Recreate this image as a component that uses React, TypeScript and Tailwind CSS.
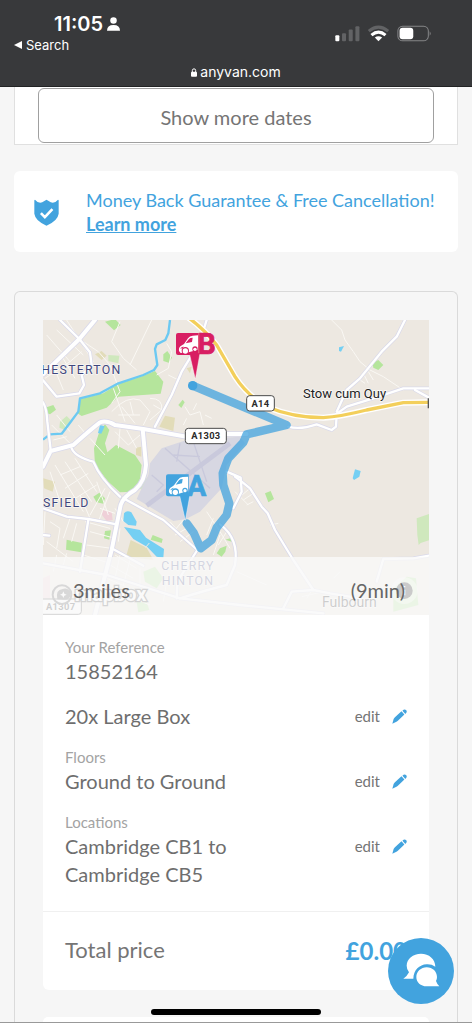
import type { ReactNode } from "react";

interface SummaryItem {
  label?: string;
  value: string;
  editable: boolean;
}

const SUMMARY: SummaryItem[] = [
  { label: "Your Reference", value: "15852164", editable: false },
  { value: "20x Large Box", editable: true },
  { label: "Floors", value: "Ground to Ground", editable: true },
  { label: "Locations", value: "Cambridge CB1 to Cambridge CB5", editable: true },
];

const PARKS = [
  "M345 168 L370 200 L362 236 L235 245 L200 278 L125 303 L112 295 L122 252 L190 235 L235 207 L310 182 Z",
  "M195 328 L208 345 L195 385 L202 412 L228 390 L285 420 L305 450 L300 495 L280 530 L240 532 L205 500 L165 450 L162 400 L178 350 Z",
  "M195 20 L225 12 L242 30 L222 46 Z",
  "M370 118 L382 108 L396 128 L386 143 L370 138 Z",
  "M415 270 L428 254 L434 262 L424 279 Z",
  "M15 278 L40 270 L48 284 L30 298 L18 294 Z",
  "M160 545 L178 533 L195 550 L190 566 L170 562 Z",
  "M80 674 L126 684 L124 712 L78 704 Z",
  "M195 648 L213 646 L208 674 L192 670 Z",
  "M338 660 L368 672 L365 684 L332 674 Z",
  "M675 535 L692 528 L702 552 L685 562 Z",
  "M998 145 L1015 135 L1030 150 L1015 165 L1000 158 Z",
  "M540 700 L560 692 L556 710 L545 725 L530 715 Z",
  "M556 674 L575 668 L575 680 Z",
  "M310 770 L345 755 L370 790 L350 820 L315 800 Z",
  "M290 862 L320 860 L328 885 L295 892 Z",
  "M1060 820 L1100 785 L1128 790 L1135 870 L1060 890 Z",
];

const PALE_PARKS = [
  "M1130 610 L1167 597 L1167 676 L1142 684 L1136 690 L1132 660 Z",
  "M60 320 L80 303 L92 315 L75 345 L58 338 Z",
  "M205 120 L238 122 L235 145 L205 138 Z",
  "M300 495 L325 490 L318 520 L298 522 Z",
];

const SANDY = [
  "M358 335 L375 302 L405 308 L400 348 Z",
  "M165 118 L185 108 L200 122 L185 135 Z",
  "M440 160 L455 155 L450 175 Z",
  "M288 398 L304 395 L304 425 L288 420 Z",
  "M10 490 L45 500 L38 530 L12 520 Z",
  "M272 675 L320 698 L340 735 L258 725 Z",
];

const LANES = [
  "M80 15 L160 140 M20 60 L90 140 M50 45 L130 120 M35 140 L70 225 M60 115 L105 190 M15 190 L60 160 L90 140 L125 110",
  "M130 80 L175 110 L210 150 L240 230 L215 265 M240 20 L215 80 L250 130 L290 165 M335 15 L270 150",
  "M380 85 L395 110 L385 160 L350 180 M385 180 L415 195 M220 220 L255 320",
  "M215 290 Q260 240 300 255 L330 290 L310 330 M235 300 L300 300 M245 275 L285 325 M270 260 L280 300",
  "M330 250 Q370 250 365 285 L330 315 M340 270 L375 290 M435 275 L450 300 L480 290 L490 330 M460 285 L470 265 M495 300 L515 310 M440 310 L430 330",
  "M50 300 L90 350 M35 330 L95 390 M40 375 L80 365 M115 330 L140 360 M150 370 L195 420 M225 350 L265 390 L300 360 M240 340 L235 400 M260 345 L290 400",
  "M45 450 L130 590 M75 440 L155 560 M105 430 L170 530 M60 480 L120 455 M75 520 L145 475 M90 560 L170 510 M30 470 L60 560 M120 540 L150 610",
  "M170 500 L205 600 M195 520 L150 600 M180 580 L225 595 M210 530 L175 620 M135 620 L210 640 M150 650 L225 670 M140 690 L215 700",
  "M15 590 L10 690 M30 620 L60 640 L50 700 M90 610 L70 670 M110 625 L95 680 M20 680 L100 740 M50 720 L40 770 M80 715 L65 765 M130 720 L210 745",
  "M225 580 L250 620 M240 640 L235 680 M225 720 L290 760 M210 750 L280 790 M200 790 L270 820 M240 720 L225 790 M270 735 L250 810",
  "M390 620 L450 690 M405 660 L440 640 M420 680 L460 650 M430 615 L405 645 M500 590 L540 650 L570 700 M520 610 L500 660 M540 660 L520 720 M560 650 L535 690",
  "M585 530 L625 570 M600 545 L630 520 M610 555 L640 535 M620 570 L640 560 M690 630 L715 625",
  "M875 15 L905 45 L915 75 L940 110 L960 140 L990 165 L1030 185 L1090 225 M970 175 L985 205 M985 170 L1000 195 M960 195 L975 205",
  "M785 845 L850 830 M880 790 L900 770 M820 820 L800 850 M590 770 L680 810 M300 760 L300 860 M380 800 L370 860 M230 830 L330 870",
];

const ROADS = [
  "M60 15 L118 72 L150 112 L155 150 L125 180 L132 210 L118 235 L50 245 L9 196",
  "M500 15 L480 80 L425 170 L395 240 L345 335",
  "M9 262 Q20 280 22 320 L32 405",
  "M95 400 Q105 425 160 440 Q180 490 240 545",
  "M250 550 L370 615 L472 705 L412 800 L410 850",
  "M9 580 L80 605 L145 612 L230 628",
  "M145 615 L120 770",
  "M215 700 L310 752",
  "M9 660 L28 662",
  "M9 745 L200 780 L420 850 L600 870 L850 895",
  "M560 470 L602 488 L605 530 L580 580",
  "M585 485 L605 500 L630 520 L665 575 L683 595 L705 645 L760 735 L820 825",
  "M540 628 Q598 670 585 750 L560 810 Q500 825 420 850",
  "M1095 15 L1070 65 L1025 110 L960 190 L920 225 L890 290",
  "M1167 220 L1090 220 L1000 250 L920 275 L885 300",
  "M1125 225 L1167 248",
  "M745 335 Q780 345 830 328 L875 345 L888 335 L890 300",
  "M1167 722 L1120 730 L1030 732 L1010 800",
  "M730 880 L755 830 L820 825 L870 835 L960 850",
];

const MAIN_ROADS = [
  "M165 15 L118 72 L9 178",
  "M9 455 L32 408 L100 390 Q150 345 180 322 Q200 315 225 330 L310 342 L440 365 L560 357 L620 357",
  "M308 342 L318 450 Q315 500 285 525 Q250 545 242 570 L215 705 L185 820 L165 900",
];

const ROUTE =
  "M458 212 L740 330 L620 358 L610 382 L565 430 L548 475 L550 510 L568 565 L560 600 L530 638 L515 675 L482 700 L462 655 L440 625";

const A14 =
  "M445 8 Q490 40 530 90 L585 185 Q620 240 680 275 Q760 308 850 308 Q900 305 980 285 L1090 263 L1167 262";

function Shield({ x, y, width, label }: { x: number; y: number; width: number; label: string }) {
  return (
    <g>
      <rect x={x} y={y} width={width} height="46" rx="9" fill="#fff" stroke="#4a4a4a" strokeWidth="3" />
      <text x={x + width / 2} y={y + 33} textAnchor="middle" fontSize="28" fontWeight="700" fill="#2b2b2b" letterSpacing="1">
        {label}
      </text>
    </g>
  );
}

// van badge, letter and needle; (x, y) is the badge's top left
function Pin({ x, y, color, letter }: { x: number; y: number; color: string; letter: string }) {
  return (
    <g transform={`translate(${x} ${y})`}>
      <path d="M40 60 H72 L58 138 Z" fill={color} stroke="#fff" strokeOpacity="0.6" strokeWidth="2" />
      <text
        x="92"
        y="64"
        textAnchor="middle"
        fontSize="86"
        fontWeight="700"
        fill={color}
        stroke={color}
        strokeWidth="2"
      >
        {letter}
      </text>
      <path d="M6 0 H68 V66 H6 Q0 66 0 60 V6 Q0 0 6 0 Z" fill={color} />
      <path
        d="M9 54 Q7 42 18 37 L24 33 L36 16 Q41 8 50 8 L66 7 V50 L38 58 L14 60 Z"
        fill="#fff"
      />
      <path d="M29 31 L39 18 Q42 14 50 14 L48 27 Z" fill={color} />
      <path d="M14 46 L22 42" stroke={color} strokeWidth="3" />
      <circle cx="28" cy="53" r="11" fill={color} />
      <circle cx="28" cy="54" r="8" fill="#fff" />
      <circle cx="57" cy="48" r="8" fill={color} />
      <circle cx="57" cy="49" r="5" fill="#fff" />
    </g>
  );
}

function RouteMap() {
  return (
    <svg viewBox="9 15 1158 885" className="block h-auto w-full font-['Roboto',sans-serif]" role="img" aria-label="Route map">
      <rect x="9" y="15" width="1158" height="885" fill="#ede8e1" />
      {SANDY.map((d) => (
        <path key={d} d={d} fill="#e2dcb9" />
      ))}
      {PALE_PARKS.map((d) => (
        <path key={d} d={d} fill="#cfe8bd" />
      ))}
      {PARKS.map((d) => (
        <path key={d} d={d} fill="#b5e59c" />
      ))}
      <path d="M188 585 L215 590 L218 615 L200 618 L186 600 Z M9 790 L30 780 V850 H9 Z" fill="#efd0d8" />

      {/* Airfield */}
      <path
        d="M365 400 L440 375 L600 365 L615 385 L560 450 L545 520 L480 590 L438 612 L400 618 L290 552 L305 520 L325 480 L330 445 Z"
        fill="#d7d7e2"
      />
      <g stroke="#c9c9dc" fill="none">
        <path d="M320 572 L570 385" strokeWidth="14" />
        <path d="M375 400 L510 520 M460 380 L500 500 M335 480 L370 510 L350 530 M400 420 L480 425 M420 385 L410 440" strokeWidth="4" />
      </g>

      <g fill="none" stroke="#faf8f4" strokeWidth="3" strokeLinejoin="round">
        {LANES.map((d) => (
          <path key={d} d={d} />
        ))}
      </g>

      {/* River and ponds */}
      <path
        d="M390 15 L385 55 L376 75 L350 88 L345 102 L352 150 L342 165 L310 180 L235 205 L180 235 L120 250 L115 290 L85 330 L65 356 L30 358 L9 374"
        fill="none"
        stroke="#6cc9f2"
        strokeWidth="7"
        strokeLinejoin="round"
      />
      <g fill="#74cff3">
        <path d="M180 330 L194 334 L184 356 L174 354 Z" />
        <path d="M252 595 Q260 585 274 592 L290 620 L288 632 L265 630 L250 618 Z" />
        <path d="M252 636 L300 645 L318 668 L372 702 L370 728 L350 725 L322 696 L280 672 Z" />
        <path d="M897 97 L912 93 L903 110 L897 108 Z" />
        <path d="M945 463 L962 468 L958 485 L942 495 L938 490 Z" />
      </g>
      <path d="M316 698 L328 684" stroke="#ede8e1" strokeWidth="3" />

      <g fill="none" strokeLinejoin="round" strokeLinecap="round">
        {ROADS.map((d) => (
          <path key={d} d={d} stroke="#d9d9ea" strokeWidth="11" />
        ))}
        {MAIN_ROADS.map((d) => (
          <path key={d} d={d} stroke="#d9d9ea" strokeWidth="17" />
        ))}
        {ROADS.map((d) => (
          <path key={d} d={d} stroke="#fff" strokeWidth="7" />
        ))}
        {MAIN_ROADS.map((d) => (
          <path key={d} d={d} stroke="#fff" strokeWidth="12" />
        ))}
        <path d={A14} stroke="#fff" strokeWidth="18" />
        <path d={A14} stroke="#f3cf5b" strokeWidth="10" />
        <path d={ROUTE} stroke="#42a3de" strokeOpacity="0.75" strokeWidth="25" />
      </g>
      <circle cx="458" cy="212" r="14" fill="#42a3de" />
      <path d="M1165 250 V280" stroke="#555" strokeWidth="4" />

      <Shield x={436} y={340} width={123} label="A1303" />
      <Shield x={620} y={242} width={83} label="A14" />
      <Shield x={0} y={852} width={124} label="A1307" />

      <g fill="#3f477d" stroke="#fff" strokeWidth="4" strokeOpacity="0.7" paintOrder="stroke" fontSize="37" className="tracking-widest">
        <text x="4" y="177">HESTERTON</text>
        <text x="9" y="575">SFIELD</text>
        <text x="444" y="766" textAnchor="middle">CHERRY</text>
        <text x="444" y="810" textAnchor="middle">HINTON</text>
      </g>
      <g fill="#222" stroke="#fff" strokeWidth="4" strokeOpacity="0.8" paintOrder="stroke" fontSize="39">
        <text x="789" y="250">Stow cum Quy</text>
        <text x="846" y="877" fontSize="42">Fulbourn</text>
      </g>

      <Pin x={408} y={54} color="#d81e62" letter="B" />
      <Pin x={378} y={478} color="#42a3de" letter="A" />

      {/* Attribution */}
      <circle cx="66" cy="839" r="28" fill="none" stroke="#555" strokeWidth="6" />
      <path d="M52 853 Q46 824 68 822 A17 17 0 1 1 72 854 Z" fill="#555" />
      <path d="M70 829 L73 836 L80 839 L73 842 L70 849 L67 842 L60 839 L67 836 Z" fill="#fff" />
      <text x="104" y="857" fontSize="60" fontWeight="700" fill="#fff" stroke="#444" strokeWidth="8" paintOrder="stroke">
        mapbox
      </text>
      <circle cx="1093" cy="827" r="40" fill="#fff" fillOpacity="0.5" />
      <circle cx="1093" cy="827" r="25" fill="#111" />
      <path d="M1093 813 V817 M1093 824 V841" stroke="#fff" strokeWidth="6" />
    </svg>
  );
}

function PencilIcon() {
  return (
    <svg viewBox="0 0 46 46" className="size-[15px] fill-[#42a3de]" aria-hidden="true">
      <path d="M1 45 L5 31 Q6 28 9 25 L29 7 L38 17 L18 36 Q15 39 12 40 Z" />
      <path d="M32 5 Q38 -1 43 3 Q48 8 42 14 L41 15 Z" />
    </svg>
  );
}

function StatusBar() {
  return (
    <header className="border-b border-[#222324] bg-[#38393b] pt-3 pb-[5px] font-['Inter',sans-serif] text-white">
      <div className="flex items-center justify-between pr-10 pl-3.5">
        <div>
          <div className="flex items-center gap-1 pl-10 text-xl leading-6 font-semibold">
            <span>11:05</span>
            <svg viewBox="0 0 40 42" className="h-3.5 w-[13px] fill-white" aria-hidden="true">
              <circle cx="20" cy="10" r="10" />
              <path d="M0 42 Q0 24 20 24 Q40 24 40 42 Z" />
            </svg>
          </div>
          <a href="#search" className="flex items-center gap-1 text-[13px] leading-[18px]">
            <svg viewBox="0 0 8 8" className="size-2 fill-white" aria-hidden="true">
              <path d="M0 4 L8 0 V8 Z" />
            </svg>
            Search
          </a>
        </div>
        <svg viewBox="0 0 290 50" className="h-[17px] w-[97px]" aria-hidden="true">
          <rect x="1" y="30" width="12" height="18" rx="3" fill="#fff" />
          <g fill="#626365">
            <rect x="21" y="24" width="12" height="24" rx="3" />
            <rect x="41" y="13" width="12" height="35" rx="3" />
            <rect x="61" y="3" width="12" height="45" rx="3" />
          </g>
          <g fill="none" strokeWidth="9">
            <path d="M101 18 Q130 -6 159 18" stroke="#626365" />
            <path d="M109 30 Q130 12 151 30" stroke="#fff" />
          </g>
          <path d="M119 37 Q130 29 141 37 L130 48 Z" fill="#fff" />
          <rect x="188" y="3" width="91" height="44" rx="14" fill="none" stroke="#858688" strokeWidth="3" />
          <rect x="193" y="8" width="41" height="34" rx="9" fill="#fff" />
          <path d="M283 18 Q289 25 283 32 Z" fill="#858688" />
        </svg>
      </div>
      <a href="#page" className="mt-[9px] flex items-center justify-center gap-[3px] text-sm leading-[18px]">
        <svg viewBox="0 0 18 26" className="h-[9px] w-1.5" aria-hidden="true">
          <rect y="11" width="18" height="15" rx="3" fill="#fff" />
          <path d="M4 12 V7 Q4 2 9 2 Q14 2 14 7 V12" fill="none" stroke="#fff" strokeWidth="3" />
        </svg>
        anyvan.com
      </a>
    </header>
  );
}

function Guarantee() {
  return (
    <section className="mt-[26px] flex items-center rounded-md bg-white pt-[17px] pb-4 pl-5">
      <svg viewBox="0 0 76 80" className="h-[27px] w-[25px] shrink-0" aria-hidden="true">
        <path d="M3 1 Q14 14 25 9 L38 1 L51 9 Q62 14 73 1 L75 3 V44 Q72 66 38 80 Q4 66 1 44 V3 Z" fill="#42a3de" />
        <path d="M21 42 L33 54 L56 30" fill="none" stroke="#fff" strokeWidth="8" />
      </svg>
      <p className="ml-[27px] text-lg leading-6 text-[#42a3de]">
        Money Back Guarantee &amp; Free Cancellation!
        <br />
        <a href="#guarantee" className="font-bold underline">
          Learn more
        </a>
      </p>
    </section>
  );
}

function SummaryRow({ item, children }: { item: SummaryItem; children?: ReactNode }) {
  return (
    <div>
      {item.label && <dt className="text-[15px] leading-5 text-[#a3a3a3]">{item.label}</dt>}
      <dd className="flex items-start justify-between text-xl leading-7 text-[#6e6e6e]">
        <span className="max-w-[180px]">{item.value}</span>
        {children}
      </dd>
    </div>
  );
}

function App() {
  return (
    <div className="flex min-h-screen flex-col border-b border-[#999] bg-[#f6f6f6] font-['Lato',sans-serif]">
      <StatusBar />

      <main className="flex flex-1 flex-col px-3.5">
        <div className="border-x border-b border-[#e0e0e0] bg-white px-[23px] py-px">
          <button className="h-[55px] w-full rounded-md border border-[#a0a0a0] bg-white pt-0.5 text-xl text-[#757575]">
            Show more dates
          </button>
        </div>

        <Guarantee />

        <section className="mt-[39px] flex flex-1 flex-col rounded-t-md border-x border-t border-[#dadada] px-7 pt-7">
          <div className="relative">
            <RouteMap />
            <div className="absolute inset-x-0 bottom-0 flex h-[58px] items-center justify-between bg-[#f9f9f9]/80 pt-2 pr-6 pl-[30px] text-xl text-[#666]">
              <span>3miles</span>
              <span>(9min)</span>
            </div>
          </div>

          <div className="rounded-b-md bg-white">
            <dl className="flex flex-col gap-[17px] px-[22px] pt-[22px] pb-[23px]">
              {SUMMARY.map((item) => (
                <SummaryRow key={item.value} item={item}>
                  {item.editable && (
                    <button className="flex h-7 items-center gap-3 text-[15px] text-[#757575]" aria-label={`edit ${item.value}`}>
                      edit
                      <PencilIcon />
                    </button>
                  )}
                </SummaryRow>
              ))}
            </dl>
            <div className="flex h-[79px] items-center justify-between border-t border-[#f0f0f0] px-[22px] pb-1 text-[22px] text-[#757575]">
              <span>Total price</span>
              <span className="pt-1 text-2xl font-bold text-[#42a3de]">£0.00</span>
            </div>
          </div>

          <div className="mt-[27px] flex-1 rounded-t-md bg-white" />
        </section>
      </main>

      {/* Chat launcher */}
      <button aria-label="Chat" className="fixed right-[18px] bottom-[19px] size-[66px] rounded-full bg-[#42a3de]">
        <svg viewBox="454 354 198 198" className="size-full" aria-hidden="true">
          <path d="M500 476 Q512 468 517 457 Q510 448 510 437 C510 416 529 401 553 401 C577 401 596 417 596 440 Q584 432 570 433 C548 434 531 450 530 476 Z" fill="#fff" />
          <path d="M608 499 L570 499 C552 499 539 487 539 471 C539 455 553 442 570 442 C588 442 601 455 601 471 Q601 478 598 483 Q601 492 608 499 Z" fill="#fff" />
        </svg>
      </button>

      <div className="fixed bottom-2 left-1/2 h-1.5 w-[170px] -translate-x-1/2 rounded-full bg-black" />
    </div>
  );
}

export default App;
